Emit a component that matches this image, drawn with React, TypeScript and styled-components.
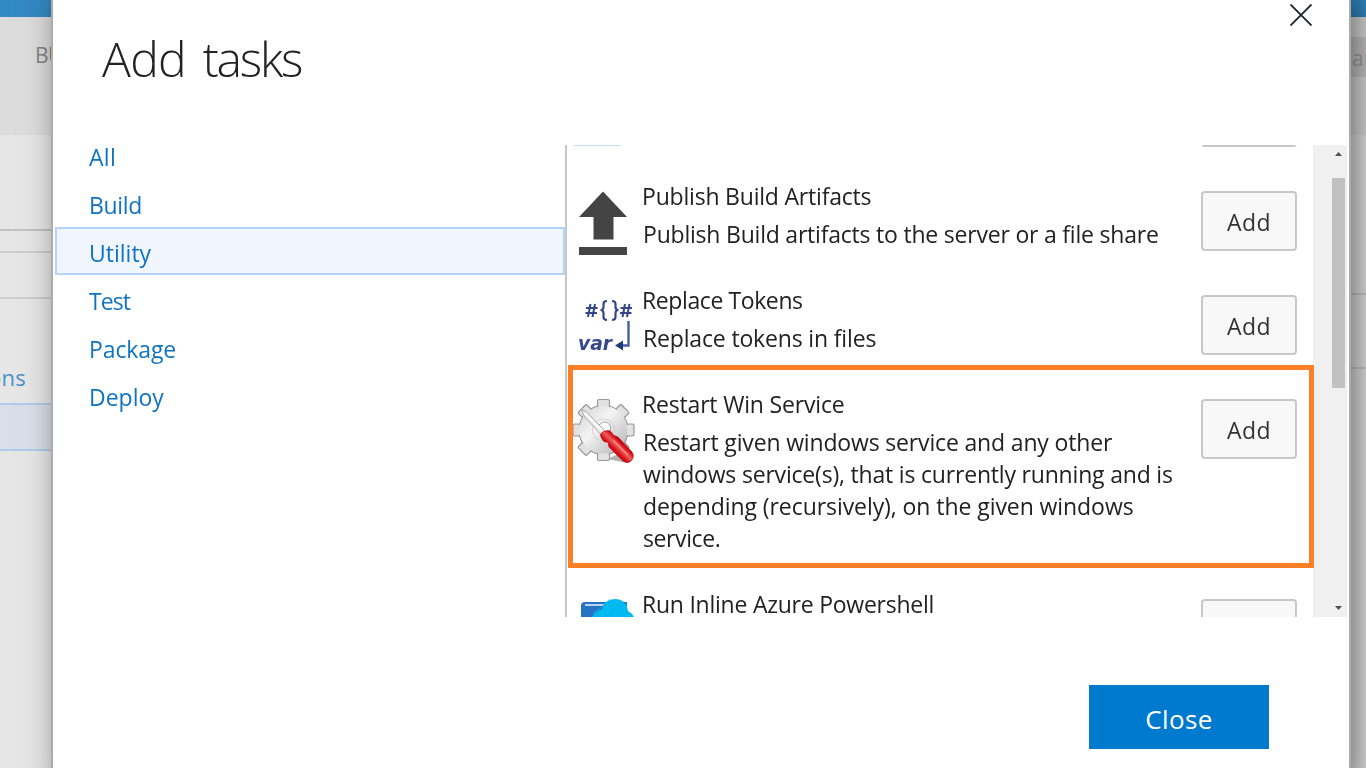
import React from "react";
import styled, { createGlobalStyle } from "styled-components";

const Global = createGlobalStyle`
  *, *::before, *::after { box-sizing: border-box; }
  html, body { margin: 0; height: 100%; overflow: hidden; }
  body { font-family: "Open Sans", "Noto Sans", sans-serif; font-size: 23px; color: #222; background: #e6e6e6; }
  button { font-family: inherit; padding: 0; cursor: pointer; }
`;

const Page = styled.div`
  width: 1366px;
  height: 768px;
  overflow: hidden;
  display: flex;
  flex-direction: column;
  background: #e6e6e6;
`;
const TopBar = styled.div`
  flex: 0 0 17px;
  background: #3389c4;
`;
const HubBar = styled.div`
  flex: 0 0 118px;
  display: flex;
  justify-content: space-between;
  padding-top: 20px;
  background: #dcdcdc;
`;
const HubTitle = styled.span`
  padding-left: 35px;
  font-size: 21px;
  line-height: 36px;
  letter-spacing: -0.5px;
  color: #858585;
`;
const SearchBox = styled.div`
  width: 40px;
  height: 40px;
  padding-left: 26px;
  overflow: hidden;
  background: #c8c8c8;
  color: #a2a2a2;
  font-size: 21px;
  line-height: 43px;
  white-space: nowrap;
`;
const PageBody = styled.div`
  flex: 1;
  display: flex;
  justify-content: space-between;
`;
const SideColumn = styled.div`
  width: 60px;
  overflow: hidden;
`;
const Strip = styled.div<{ $h: number; $line?: string }>`
  height: ${(p) => p.$h}px;
  border-bottom: 2px solid ${(p) => p.$line ?? "#cdcdcd"};
`;
const SideLink = styled.div`
  height: 104px;
  padding: 62px 0 0 0;
  margin-left: -12px;
  line-height: 32px;
  font-size: 22px;
  letter-spacing: 0.2px;
  color: #4a90c6;
`;
const SideSelected = styled.div`
  height: 48px;
  background: #d9dfe8;
  border: solid #b0cbea;
  border-width: 2px 0;
`;

const Dialog = styled.section`
  position: fixed;
  top: -10px;
  left: 51px;
  width: 1300px;
  height: 800px;
  padding-top: 10px;
  display: flex;
  flex-direction: column;
  background: #fff;
  border: 2px solid #acacac;
  border-top: 0;
  box-shadow: 8px 0 30px rgba(0, 0, 0, 0.5);
`;
const Header = styled.header`
  flex: 0 0 145px;
  display: flex;
  justify-content: space-between;
  padding: 0 37px 0 49px;
`;
const Title = styled.h1`
  margin: 26px 0 0;
  font-size: 48px;
  line-height: 66px;
  font-weight: 300;
  letter-spacing: -0.7px;
  word-spacing: 5px;
  span { letter-spacing: -2.2px; }
`;
const CloseIcon = styled.button`
  width: 22px;
  height: 22px;
  margin-top: 4px;
  border: 0;
  background: none;
  svg { display: block; }
`;
const Content = styled.div`
  flex: 0 0 472px;
  display: flex;
`;
const Nav = styled.nav`
  flex: 0 0 512px;
  padding: 0 0 0 2px;
  margin-top: -14px;
`;
const NavItem = styled.div<{ $active?: boolean; $ls?: number }>`
  height: 48px;
  padding-left: 32px;
  border: 2px solid ${(p) => (p.$active ? "#b3d3fb" : "transparent")};
  background: ${(p) => (p.$active ? "#f1f6fe" : "transparent")};
  color: #0f73c4;
  line-height: 49px;
  letter-spacing: ${(p) => p.$ls ?? 0}px;
`;
const ListPane = styled.div`
  position: relative;
  z-index: 1;
  flex: 0 0 749px;
  height: 472px;
  overflow: hidden;
  border-left: 2px solid #c8c8c8;
`;
const Tasks = styled.div`
  margin-top: -74px;
`;
const TaskRow = styled.article<{ $h?: number }>`
  position: relative;
  display: flex;
  height: ${(p) => p.$h ?? 104}px;
  padding: 6px 17px 0 4px;
`;
const IconSlot = styled.div`
  flex: 0 0 71px;
  padding-top: 8px;
  svg { display: block; }
`;
const TaskText = styled.div`
  flex: 1;
  margin-top: -1px;
`;
const TaskName = styled.div<{ $ls?: number }>`
  line-height: 32px;
  letter-spacing: ${(p) => p.$ls ?? 0}px;
`;
const TaskLine = styled.div<{ $ls?: number }>`
  padding-left: 1px;
  line-height: 32px;
  white-space: nowrap;
  letter-spacing: ${(p) => p.$ls ?? 0}px;
`;
const TaskDetail = styled.div`
  margin-top: 6px;
`;
const AddButton = styled.button`
  flex: 0 0 96px;
  height: 60px;
  margin-top: 10px;
  border: 2px solid #c8c8c8;
  border-radius: 4px;
  background: #f8f8f8;
  color: #333;
  font-size: 23px;
  line-height: 58px;
  letter-spacing: 0.4px;
`;
const Highlight = styled.div`
  position: absolute;
  top: -18px;
  left: 1px;
  width: 746px;
  height: 203px;
  border: 5px solid #ff7f27;
  pointer-events: none;
`;
const Scrollbar = styled.div`
  flex: 0 0 34px;
  margin-left: -1px;
  display: flex;
  flex-direction: column;
  align-items: flex-end;
  justify-content: space-between;
  padding: 7px 2px 7px 0;
  background: #f0f0f0;
`;
const ArrowIcon = styled.svg`
  display: block;
  margin-right: 3px;
`;
const Track = styled.div`
  flex: 1;
  padding: 22px 0 0;
`;
const Thumb = styled.div`
  width: 13px;
  height: 210px;
  background: #c1c1c1;
`;
const Footer = styled.footer`
  display: flex;
  justify-content: flex-end;
  padding: 68px 80px 0 0;
`;
const CloseButton = styled.button`
  width: 180px;
  height: 64px;
  border: 0;
  background: #007acf;
  color: #fff;
  font-size: 26px;
  line-height: 68px;
  letter-spacing: 0.4px;
`;

const PreviousIcon = () => (
  <svg width="60" height="66" viewBox="0 0 60 66">
    <rect x="0" y="8" width="52" height="53" rx="5" fill="#c3d9ee" />
  </svg>
);

const UploadIcon = () => (
  <svg width="60" height="68" viewBox="0 0 60 68">
    <path d="M32 2.500 56 28H42.500V50.500H22.500V28H8ZM8 58H56V66H8Z" fill="#444" />
  </svg>
);

const TokensIcon = () => (
  <svg width="64" height="66" viewBox="0 0 64 66" fill="none" stroke="#34478a">
    <g transform="translate(0 -4)">
      <path strokeWidth="2" d="M19.500 15 17 28M24 15 21.500 28M15 19H26.500M14.500 24H26" />
      <path strokeWidth="2" d="M54 15 51.500 28M58.500 15 56 28M49.500 19H61M49 24H60.500" />
      <path strokeWidth="2.2" d="M36 12Q32.500 12 32.500 15V18Q32.500 21 29.500 21Q32.500 21 32.500 24V28Q32.500 31 36 31M41 12Q44.500 12 44.500 15V18Q44.500 21 47.500 21Q44.500 21 44.500 24V28Q44.500 31 41 31" />
    </g>
    <path strokeWidth="2.4" d="M57.500 28V52.500H50" stroke="#46609f" />
    <path d="M44 52.500 52 47.500V57.500Z" fill="#203b80" stroke="none" />
    <text x="7" y="57" fill="#34478a" stroke="none" fontFamily="DejaVu Sans, sans-serif" fontStyle="italic" fontWeight="700" fontSize="19" textLength="34" lengthAdjust="spacingAndGlyphs">var</text>
  </svg>
);

const teeth = [0, 45, 90, 135, 180, 225, 270, 315];

const GearIcon = () => (
  <svg width="66" height="68" viewBox="0 0 66 68">
    <defs>
      <linearGradient id="metal" x1="0" y1="0" x2="1" y2="1">
        <stop offset="0" stopColor="#d4d4d4" />
        <stop offset=".4" stopColor="#f4f4f4" />
        <stop offset=".7" stopColor="#d2d2d2" />
        <stop offset="1" stopColor="#b4b4b4" />
      </linearGradient>
      <linearGradient id="grip" x1="0" y1="1" x2="1" y2="0">
        <stop offset="0" stopColor="#b50007" />
        <stop offset=".42" stopColor="#d80d18" />
        <stop offset=".52" stopColor="#f0605e" />
        <stop offset=".62" stopColor="#d20a12" />
        <stop offset="1" stopColor="#9e0005" />
      </linearGradient>
    </defs>
    <path d="M36 62 56 66Q66 63 57 53Z" fill="#666" opacity=".5" />
    <g stroke="#999" strokeWidth="1.200" fill="#dedede">
      {teeth.map((a) => (
        <path key={a} transform={`rotate(${a} 32.500 33)`} d="M24 14 26.500 9V4Q26.500 2.500 28 2.500H37Q38.500 2.500 38.500 4V9L41 14Z" />
      ))}
      <circle cx="32.500" cy="33" r="24.500" fill="url(#metal)" />
    </g>
    <g stroke="#e2e2e2" strokeWidth="10">
      {teeth.map((a) => (
        <path key={a} transform={`rotate(${a} 32.500 33)`} d="M32.500 4V14" />
      ))}
    </g>
    <circle cx="32.500" cy="33" r="23.800" fill="url(#metal)" />
    <circle cx="32.500" cy="33" r="11" fill="none" stroke="#d0d0d0" />
    <circle cx="33.500" cy="31" r="6" fill="#fff" stroke="#a2a2a2" />
    <path d="M10 12 15.500 15 36 36 32 40 13 19Z" fill="#e9e9e9" stroke="#aaa" strokeWidth="1" />
    <path d="M14 16 34 37" stroke="#fff" strokeWidth="1.500" />
    <path d="M31 42Q27 36 34 34Q40 32 42 38L47 40 61 55Q64 60 60 64Q57 67 52 64L38 50 37 45Q33 46 31 42Z" fill="url(#grip)" stroke="#a40007" strokeWidth=".6" />
    <path d="M42 43 57 58" stroke="#f58a85" strokeWidth="1.500" />
  </svg>
);

const AzureIcon = () => (
  <svg width="64" height="28" viewBox="0 0 64 28">
    <path d="M10 9Q10 5 14 5H56V28H10Z" fill="#2673c4" />
    <path d="M14 8H33" stroke="#b9d4ee" strokeWidth="2" />
    <path d="M20 28Q19 16 31 12Q34 2 44 2Q55 2 57 14Q63 17 64 24V28H20Z" fill="#00b9f1" />
    <path d="M22 17 39 2M30 20 49 3M42 20 56 7" stroke="#22bff0" strokeWidth="0.6" />
  </svg>
);

type Line = { text: string; ls?: number };
type Task = { icon: React.ReactNode; name: string; ls?: number; lines: Line[]; height?: number; marked?: boolean };

const tasks: Task[] = [
  { icon: <PreviousIcon />, name: "", lines: [] },
  {
    icon: <UploadIcon />,
    name: "Publish Build Artifacts",
    ls: -0.2,
    lines: [{ text: "Publish Build artifacts to the server or a file share", ls: -0.21 }],
  },
  {
    icon: <TokensIcon />,
    name: "Replace Tokens",
    ls: -0.4,
    lines: [{ text: "Replace tokens in files", ls: -0.16 }],
  },
  {
    icon: <GearIcon />,
    name: "Restart Win Service",
    ls: -0.18,
    height: 200,
    marked: true,
    lines: [
      { text: "Restart given windows service and any other", ls: -0.16 },
      { text: "windows service(s), that is currently running and is", ls: -0.19 },
      { text: "depending (recursively), on the given windows", ls: -0.07 },
      { text: "service.", ls: -0.4 },
    ],
  },
  { icon: <AzureIcon />, name: "Run Inline Azure Powershell", ls: -0.24, lines: [] },
];

const categories: { label: string; ls?: number }[] = [
  { label: "All", ls: 0.3 },
  { label: "Build", ls: -0.35 },
  { label: "Utility" },
  { label: "Test", ls: -0.9 },
  { label: "Package", ls: -0.12 },
  { label: "Deploy" },
];

export default function App() {
  return (
    <>
      <Global />
      <Page>
        <TopBar />
        <HubBar>
          <HubTitle>BU</HubTitle>
          <SearchBox>ar</SearchBox>
        </HubBar>
        <PageBody>
          <SideColumn>
            <Strip $h={96} $line="#c1c1c1" />
            <Strip $h={22} />
            <Strip $h={46} />
            <SideLink>ons</SideLink>
            <SideSelected />
          </SideColumn>
          <SideColumn>
            <Strip $h={160} />
            <Strip $h={74} />
          </SideColumn>
        </PageBody>
      </Page>
      <Dialog role="dialog">
        <Header>
          <Title>
            Add <span>tasks</span>
          </Title>
          <CloseIcon aria-label="Close dialog">
            <svg width="22" height="22" viewBox="0 0 22 22" stroke="#1d2029" strokeWidth="1.8">
              <path d="M0.500 0.500 21.500 21.500M21.500 0.500 0.500 21.500" />
            </svg>
          </CloseIcon>
        </Header>
        <Content>
          <Nav>
            {categories.map((c) => (
              <NavItem key={c.label} $active={c.label === "Utility"} $ls={c.ls}>
                {c.label}
              </NavItem>
            ))}
          </Nav>
          <ListPane>
            <Tasks>
              {tasks.map((t) => (
                <TaskRow key={t.name} $h={t.height}>
                  <IconSlot>{t.icon}</IconSlot>
                  <TaskText>
                    <TaskName $ls={t.ls}>{t.name}</TaskName>
                    <TaskDetail>
                      {t.lines.map((l) => (
                        <TaskLine key={l.text} $ls={l.ls}>
                          {l.text}
                        </TaskLine>
                      ))}
                    </TaskDetail>
                  </TaskText>
                  <AddButton>{t.lines.length > 0 && "Add"}</AddButton>
                  {t.marked && <Highlight />}
                </TaskRow>
              ))}
            </Tasks>
          </ListPane>
          <Scrollbar>
            <ArrowIcon width="7" height="4" viewBox="0 0 7 4">
              <path d="M0 4 3.500 0 7 4Z" fill="#505050" />
            </ArrowIcon>
            <Track>
              <Thumb />
            </Track>
            <ArrowIcon width="7" height="4" viewBox="0 0 7 4">
              <path d="M0 0 3.500 4 7 0Z" fill="#505050" />
            </ArrowIcon>
          </Scrollbar>
        </Content>
        <Footer>
          <CloseButton>Close</CloseButton>
        </Footer>
      </Dialog>
    </>
  );
}
